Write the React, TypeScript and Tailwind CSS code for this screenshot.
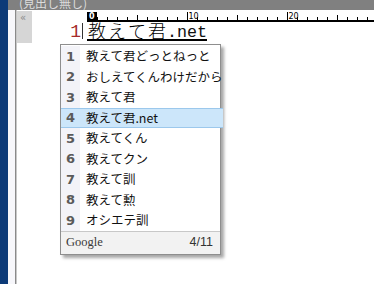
import React from "react";

const items = [
  "教えて君どっとねっと",
  "おしえてくんわけだから",
  "教えて君",
  "教えて君.net",
  "教えてくん",
  "教えてクン",
  "教えて訓",
  "教えて勲",
  "オシエテ訓",
];

const lineChars: [string, boolean][] = [
  ["教", true],
  ["え", true],
  ["て", true],
  ["君", true],
  [".", false],
  ["n", false],
  ["e", false],
  ["t", false],
];

function Ruler() {
  const ticks = [];
  for (let k = 0; k <= 28; k++) {
    const x = k * 10 + 0.5;
    if (k === 0) {
      ticks.push(<rect key={k} x={0} y={0} width={10} height={8} fill="#000" />);
      ticks.push(
        <text key={"t" + k} x={2} y={7} fontSize={8} fontWeight={700} fill="#fff" fontFamily="'DejaVu Sans', sans-serif">
          0
        </text>
      );
    } else if (k % 10 === 0) {
      ticks.push(<line key={k} x1={x} y1={0} x2={x} y2={9} stroke="#000" />);
      ticks.push(
        <text key={"t" + k} x={x + 1} y={7} fontSize={8} fill="#000" fontFamily="'DejaVu Sans', sans-serif">
          {k}
        </text>
      );
    } else if (k % 5 === 0) {
      ticks.push(<line key={k} x1={x} y1={3} x2={x} y2={9} stroke="#000" />);
    } else {
      ticks.push(<line key={k} x1={x} y1={5} x2={x} y2={9} stroke="#000" />);
    }
  }
  return (
    <svg width={287} height={10} className="block">
      <rect x={0} y={8} width={287} height={2} fill="#000" />
      {ticks}
    </svg>
  );
}

export default function App() {
  return (
    <div className="relative flex w-[374px] h-[284px] overflow-hidden bg-white">
      <div className="w-[8px] bg-[#0c3a78]" />
      <div className="flex-1 flex flex-col">
        <div className="h-[10px] bg-[#808080] overflow-hidden">
          <p className="pl-[11px] -mt-[5px] text-[12px] leading-[15px] text-[#dcdcdc] font-['Noto_Sans_CJK_JP',sans-serif]">
            (見出し無し)
          </p>
        </div>
        <div className="flex-1 flex">
          <div className="w-[7px] bg-[#f7f7fb]" />
          <div className="w-[1px] bg-[#8a8a8a]" />
          <div className="w-[1px] bg-[#c8c8c8]" />
          <div className="flex-1 flex items-start">
            <div className="w-[15px] h-[32px] mt-[1px] bg-[#d6d6d6] text-[#8a8a8a] text-[10px] leading-[10px] pl-[3px] pt-[2px] font-['DejaVu_Sans',sans-serif]">
              «
            </div>
            <div className="flex flex-col">
              <div className="ml-[55px] mt-[2px]">
                <Ruler />
              </div>
              <div className="flex items-end mt-[1px]">
                <div className="w-[50px] text-right pr-[1px] text-[#a52a2a] text-[18px] leading-[18px] font-['Liberation_Mono',monospace]">
                  1
                </div>
                <div className="w-[1px] h-[16px] mb-[2px] bg-[#333]" />
                <div className="w-[4px]" />
                <div className="flex items-end h-[18px] border-b-2 border-black">
                  {lineChars.map(([c, wide], i) => (
                    <span
                      key={i}
                      className={
                        wide
                          ? "block w-[20px] text-center text-[18px] leading-[18px] text-black font-['Noto_Sans_CJK_JP',sans-serif] font-light"
                          : "block w-[10px] text-center text-[16.7px] leading-[12px] text-[#111] font-['Liberation_Mono',monospace]"
                      }
                    >
                      {c}
                    </span>
                  ))}
                </div>
              </div>
            </div>
          </div>
        </div>
      </div>

      <div className="absolute left-[60px] top-[44px] w-[161px] h-[211px] border border-[#8e8e8e] bg-white shadow-[3px_3px_3px_rgba(0,0,0,0.35)] flex flex-col">
        <div className="flex-1 flex">
          <div className="flex-1 flex flex-col pt-[1px]">
            {items.map((t, i) => {
              const sel = i === 3;
              return (
                <div
                  key={i}
                  className={
                    "flex items-center h-[20.5px] " +
                    (sel ? "bg-[#cce6fa] border-y border-[#9cc8ec]" : "")
                  }
                >
                  <div
                    className={
                      "w-[19px] h-full flex items-center justify-center text-[13px] font-bold text-[#5a5a5a] font-['DejaVu_Sans',sans-serif] " +
                      (sel ? "" : "bg-[#f3f3f8]")
                    }
                  >
                    {i + 1}
                  </div>
                  <div className="pl-[6px] text-[12.5px] leading-[16px] text-[#111] font-['Noto_Sans_CJK_JP',sans-serif] whitespace-nowrap">
                    {t}
                  </div>
                </div>
              );
            })}
          </div>
          <div className="w-[7px] flex flex-col">
            <div className="h-[153px] bg-[#7d91bd]" />
            <div className="h-[30px] bg-[#d9d9d9]" />
          </div>
        </div>
        <div className="h-[26px] border-t border-[#c8c8c8] bg-[#f2f2f2] flex items-center justify-between pl-[5px] pr-[7px]">
          <span className="text-[12.5px] text-[#3a3a3a] font-['Liberation_Serif',serif]">Google</span>
          <span className="text-[12.5px] text-[#333] font-['Liberation_Sans',sans-serif]">4/11</span>
        </div>
      </div>
    </div>
  );
}
